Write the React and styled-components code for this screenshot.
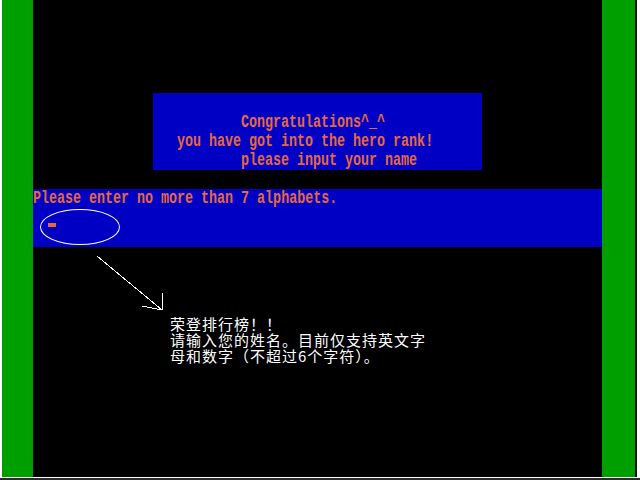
import React from "react";
import styled, { createGlobalStyle } from "styled-components";

const GlobalStyle = createGlobalStyle`
  html, body {
    margin: 0;
    padding: 0;
    background: #ffffff;
  }
`;

const Frame = styled.div`
  width: 640px;
  height: 480px;
  box-sizing: border-box;
  padding-left: 2px;
  background: #ffffff;
  border-bottom: 2px solid #2a2a2a;
  overflow: hidden;
`;

const Screen = styled.div`
  width: 635px;
  height: 477px;
  box-sizing: border-box;
  border-right: 2px solid #111111;
  display: grid;
  grid-template-columns: 31px 569px 33px;
  background: #000000;
`;

const Pillar = styled.div`
  background: #009f00;
`;

const Stage = styled.div`
  display: flex;
  flex-direction: column;
  padding-top: 93px;
  background: #000000;
  overflow: hidden;
`;

const Banner = styled.div`
  margin-left: 120px;
  width: 329px;
  height: 77px;
  box-sizing: border-box;
  padding: 20px 0 0 24px;
  background: #0000c4;
`;

const Line = styled.div`
  font-family: "Liberation Mono", "DejaVu Sans Mono", monospace;
  font-weight: bold;
  font-size: 18px;
  line-height: 19px;
  height: 19px;
  white-space: pre;
  color: #e8683c;
  transform: scaleX(0.741);
  transform-origin: left center;
`;

const InputBand = styled.div`
  margin-top: 19px;
  height: 58px;
  background: #0000c4;
  display: flex;
  flex-direction: column;
`;

const Ellipse = styled.div`
  margin: 1px 0 0 7px;
  width: 80px;
  height: 36px;
  box-sizing: border-box;
  border: 1px solid #ffffff;
  border-radius: 50%;
  padding: 13px 0 0 7px;
`;

const Cursor = styled.div`
  width: 8px;
  height: 4px;
  background: #e8683c;
`;

const Pointer = styled.svg`
  display: block;
  margin: 3px 0 0 57px;
`;

const Note = styled.div`
  margin: 4px 0 0 137px;
  font-family: "Noto Sans CJK SC", "Noto Sans", sans-serif;
  font-size: 15px;
  line-height: 16px;
  letter-spacing: 1px;
  color: #ffffff;
  white-space: pre;
`;

export default function App() {
  return (
    <Frame>
      <GlobalStyle />
      <Screen>
        <Pillar />
        <Stage>
          <Banner>
            <Line>{"        Congratulations^_^"}</Line>
            <Line>you have got into the hero rank!</Line>
            <Line>{"        please input your name"}</Line>
          </Banner>
          <InputBand>
            <Line>Please enter no more than 7 alphabets.</Line>
            <Ellipse>
              <Cursor />
            </Ellipse>
          </InputBand>
          <Pointer width="80" height="62" viewBox="0 0 80 62" shapeRendering="crispEdges">
            <g stroke="#ffffff" strokeWidth="1" fill="none">
              <line x1="7" y1="6" x2="72" y2="60" />
              <line x1="72" y1="43" x2="72" y2="60" />
              <line x1="52" y1="56" x2="72" y2="60" />
            </g>
          </Pointer>
          <Note>
            {"荣登排行榜！！\n请输入您的姓名。目前仅支持英文字\n母和数字（不超过6个字符）。"}
          </Note>
        </Stage>
        <Pillar />
      </Screen>
    </Frame>
  );
}
